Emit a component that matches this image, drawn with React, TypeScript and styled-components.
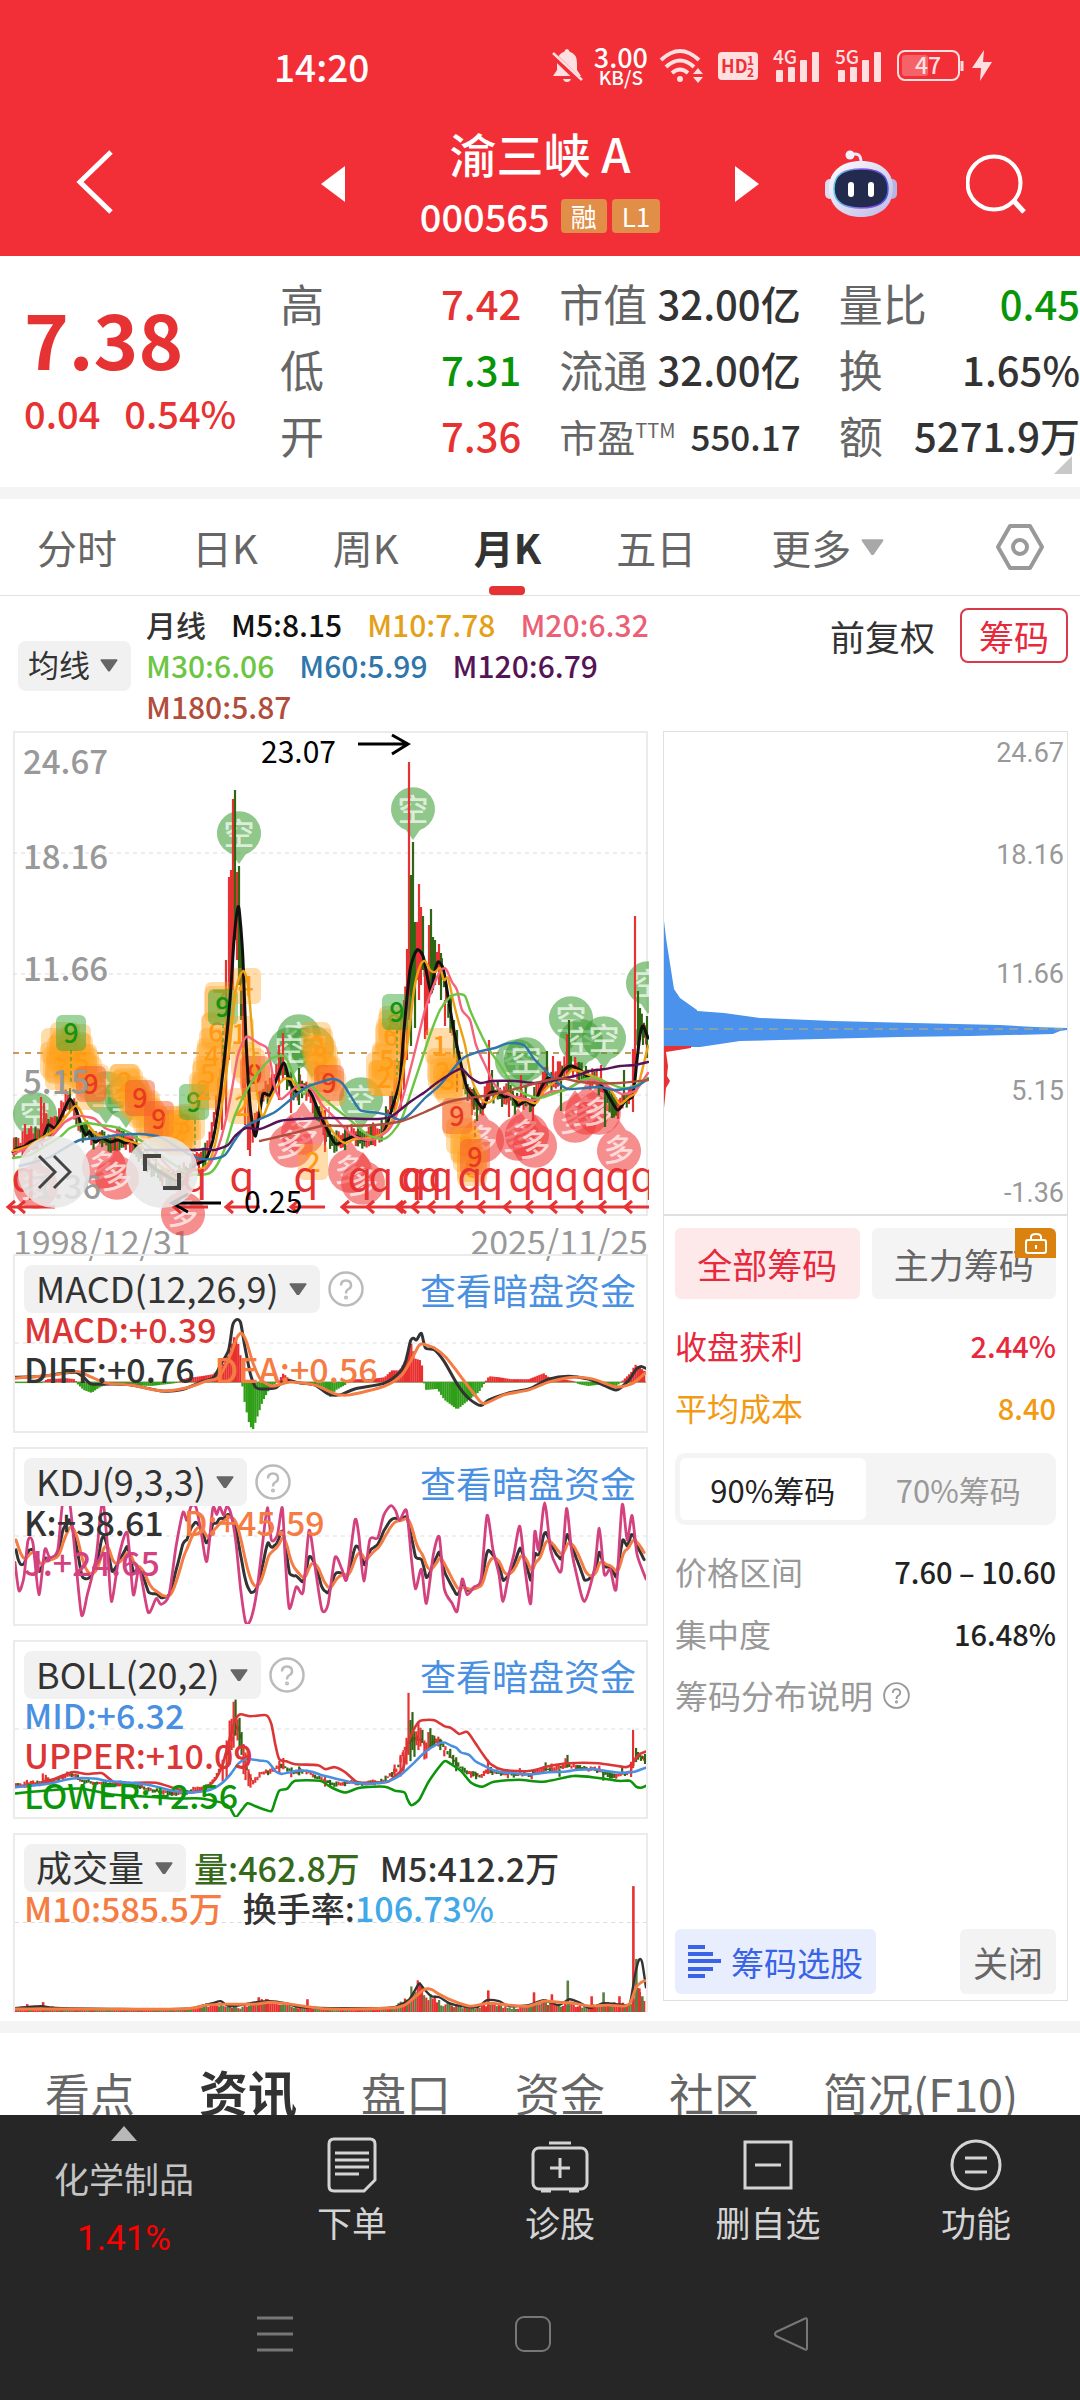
import React from "react";
import styled, { createGlobalStyle } from "styled-components";

/* ---------- theme ---------- */

const FONT = '"Noto Sans CJK SC", "Noto Sans", sans-serif';
const RED = "#e63232";
const GREEN = "#089508";
const INK = "#333333";
const GREY = "#666666";
const PALE = "#999999";
const BLUE = "#4a90e2";
const ORANGE = "#f57c42";

const GlobalStyle = createGlobalStyle`
  *, *::before, *::after { box-sizing: border-box; }
  body { margin: 0; background: #fff; font-family: ${FONT}; color: ${INK}; }
  button, select { font: inherit; color: inherit; border: 0; background: none; padding: 0; margin: 0; cursor: pointer; }
  a { text-decoration: none; color: inherit; }
  svg { display: block; flex: none; }
`;

/* ---------- series helpers ---------- */

type Point = [number, number];

const STEP = 2.15;
const X0 = 14;
const X1 = 648;

const at = (points: Point[], x: number): number => {
  if (x <= points[0][0]) return points[0][1];
  for (let i = 1; i < points.length; i++) {
    const [bx, by] = points[i];
    if (x <= bx) {
      const [ax, ay] = points[i - 1];
      return ay + ((by - ay) * (x - ax)) / (bx - ax || 1);
    }
  }
  return points[points.length - 1][1];
};

const noise = (n: number): number => {
  const v = Math.sin(n * 127.1 + 11.7) * 43758.5453;
  return v - Math.floor(v);
};

const smooth = (points: Point[]): string => {
  let d = `M${points[0][0]} ${points[0][1]}`;
  for (let i = 0; i < points.length - 1; i++) {
    const p0 = points[Math.max(0, i - 1)];
    const p1 = points[i];
    const p2 = points[i + 1];
    const p3 = points[Math.min(points.length - 1, i + 2)];
    const c = (a: number, b: number, k: number) => (a + (k * b) / 8).toFixed(1);
    d += `C${c(p1[0], p2[0] - p0[0], 1)} ${c(p1[1], p2[1] - p0[1], 1)} ${c(p2[0], p3[0] - p1[0], -1)} ${c(p2[1], p3[1] - p1[1], -1)} ${p2[0]} ${p2[1]}`;
  }
  return d;
};

const parse = (text: string): Point[] =>
  text.trim().split(/\s+/).map((pair) => pair.split(",").map(Number) as Point);

const xs: number[] = [];
for (let x = X0; x < X1; x += STEP) xs.push(x);

/* ---------- data ---------- */

const M5 = parse(`13,1152 16,1149 25,1146 30,1142 36,1140 42,1141 48,1125 55,1128 62,1115 70,1099 77,1112 82,1128 86,1135 90,1132 95,1142 102,1138 110,1142 118,1140 125,1143
  132,1141 140,1152 150,1165 160,1172 170,1178 178,1180 188,1175 195,1165 205,1160 210,1150 215,1130 222,1080 230,1000 234,940 238,907 240,918 243,960 246,1040 250,1105
  255,1136 259,1118 263,1094 270,1095 277,1078 284,1063 290,1082 297,1092 305,1086 312,1095 320,1115 330,1135 336,1144 345,1140 355,1136 364,1140 372,1138 384,1132
  393,1105 400,1080 404,1030 410,970 417,950 423,956 427,975 431,993 434,975 438,962 443,968 447,990 452,1020 460,1060 467,1088 475,1098 483,1108 489,1094 495,1092
  505,1097 512,1095 518,1105 526,1101 534,1105 540,1090 548,1078 556,1082 564,1070 571,1066 580,1070 590,1078 597,1080 605,1090 612,1102 618,1110 626,1100 633,1095
  637,1060 640,1035 643,1026 648,1038`);
const M10 = parse(`13,1151 30,1145 45,1136 55,1130 67,1115 75,1106 80,1110 85,1120 95,1133 105,1137 115,1136 125,1140 140,1145 152,1158 165,1170 180,1180 190,1172 205,1167
  212,1155 218,1130 228,1060 236,990 243,971 248,985 252,1030 256,1085 262,1116 268,1105 275,1090 284,1079 292,1080 298,1090 308,1088 316,1090 325,1118 335,1135
  345,1143 355,1139 370,1138 385,1132 392,1120 398,1100 408,1040 414,990 420,966 425,961 430,970 435,972 440,968 444,980 448,978 453,1000 458,1020 465,1045 472,1080
  482,1100 490,1102 500,1092 510,1094 518,1100 526,1100 536,1103 545,1090 555,1082 565,1078 572,1070 582,1072 592,1076 602,1080 612,1092 620,1104 628,1098 636,1092
  641,1075 648,1046`);
const M20 = parse(`13,1154 30,1147 50,1138 65,1122 78,1116 88,1117 95,1119 105,1128 115,1132 140,1140 155,1152 172,1170 188,1176 205,1170 215,1155 222,1135 230,1100 238,1055
  246,1037 252,1039 260,1044 267,1048 271,1065 275,1088 281,1099 290,1092 300,1085 312,1090 322,1105 335,1118 350,1133 362,1139 375,1139 390,1128 402,1100 414,1055
  425,1010 435,982 441,970 446,969 452,982 457,990 462,1010 470,1020 476,1045 485,1065 495,1085 505,1093 520,1098 535,1100 550,1092 565,1090 580,1082 595,1080
  610,1088 622,1094 635,1091 642,1082 648,1073`);
const M30 = parse(`13,1158 30,1155 45,1146 60,1137 70,1128 85,1123 100,1125 115,1127 130,1133 150,1148 170,1162 190,1174 207,1174 215,1168 225,1148 235,1115 248,1088 262,1068
  272,1058 284,1056 290,1066 296,1082 304,1094 310,1084 320,1095 335,1108 350,1120 368,1135 383,1139 392,1133 402,1118 415,1080 430,1035 440,1010 450,997 458,994
  465,996 470,1010 478,1028 488,1048 500,1065 512,1084 525,1094 540,1098 555,1093 570,1088 582,1080 595,1078 608,1083 622,1088 635,1086 648,1078`);
const M60 = parse(`20,1166 35,1162 50,1157 65,1148 80,1140 100,1138 118,1135 140,1134 160,1137 180,1149 197,1158 212,1159 225,1155 235,1140 245,1127 258,1120 275,1112 290,1100
  305,1088 318,1083 332,1079 342,1083 350,1095 360,1110 372,1112 388,1115 400,1120 410,1114 425,1098 440,1085 462,1059 478,1052 495,1048 505,1044 515,1043 525,1046
  535,1060 548,1073 558,1083 568,1089 585,1088 600,1087 615,1090 635,1087 648,1079`);
const M120 = parse(`145,1150 195,1150 205,1149 215,1150 228,1145 235,1136 246,1128 260,1129 280,1121 300,1119 330,1118 378,1119 392,1116 410,1102 425,1092 438,1082 460,1069
  470,1077 480,1083 492,1081 515,1081 535,1083 555,1080 575,1076 590,1071 605,1069 620,1066 635,1065 648,1062`);
const M180 = parse(`260,1141 290,1134 322,1126 345,1126 375,1125 402,1121 425,1112 445,1103 462,1099 490,1095 515,1089 540,1082 560,1078 575,1081 590,1083 620,1083 648,1080`);

/* x, high, low for the outliers of the candle series */
const SPIKES: [number, number, number, boolean][] = [
  [25, 1124, 1150, true], [41, 1097, 1135, true], [44, 1103, 1140, true], [51, 1117, 1135, true], [70, 1088, 1112, false],
  [222, 1040, 1130, true], [226, 960, 1120, true], [229, 877, 1060, true], [231, 870, 1000, true], [233, 799, 990, true], [235, 790, 940, false],
  [237, 872, 960, true], [239, 866, 985, false], [241, 925, 1020, false], [243, 975, 1100, true], [245, 1010, 1125, true], [248, 1080, 1150, true], [250, 1100, 1156, true],
  [279, 1045, 1100, true], [283, 1033, 1080, true], [299, 1068, 1105, false], [291, 1090, 1113, true], [325, 1110, 1152, true],
  [395, 1060, 1120, true], [401, 1020, 1110, true], [404, 1000, 1090, true], [407, 949, 1060, true], [409, 762, 1020, true], [411, 875, 1046, false], [413, 842, 1000, false],
  [415, 922, 1028, false], [417, 922, 980, true], [419, 884, 1000, true], [421, 907, 985, true], [423, 916, 970, false], [425, 960, 1039, true], [427, 985, 1035, true],
  [429, 925, 980, true], [431, 909, 990, false], [433, 937, 990, false], [435, 940, 985, false], [437, 952, 970, true], [439, 944, 985, true], [441, 953, 1000, false],
  [445, 1000, 1026, true], [451, 995, 1030, false], [454, 1020, 1058, false], [457, 1030, 1088, false], [472, 1090, 1115, true], [477, 1095, 1121, false],
  [489, 1040, 1100, true], [492, 1070, 1095, false], [509, 1098, 1117, true], [521, 1075, 1100, true], [533, 1100, 1121, true], [547, 1051, 1085, false],
  [553, 1056, 1080, true], [561, 1080, 1111, false], [567, 1034, 1075, true], [569, 1020, 1070, false], [579, 1062, 1080, false], [601, 1065, 1092, true],
  [605, 1090, 1127, false], [612, 1095, 1118, false], [618, 1100, 1119, true], [624, 1070, 1100, false], [633, 1049, 1112, true], [635, 916, 1075, true],
  [638, 991, 1050, false], [640, 1008, 1040, false], [643, 1030, 1045, false], [647, 1016, 1058, false],
];

interface Candle { x: number; high: number; low: number; up: boolean }

const candles: Candle[] = [
  ...xs.map((x, i) => {
    const mid = at(M5, x + 2);
    const slope = at(M5, x + 4) - at(M5, x - 1);
    return {
      x,
      high: mid - 3 - noise(i) * 12,
      low: mid + 2 + noise(i + 500) * 10,
      up: noise(i + 900) < (slope < 0 ? 0.8 : 0.35),
    };
  }),
  ...SPIKES.map(([x, high, low, up]) => ({ x, high, low, up })),
];

const MACD_BARS = parse(`13,-1 40,-1 45,3 65,4 73,3 76,-2 82,-8 90,-11 97,-6 105,-2 130,-3 150,-4 175,-1 185,4 200,6 212,8 220,15 226,24 230,36 234,48 238,38 240,26 242,-6 244,-20
  248,-40 252,-50 256,-38 262,-20 270,-5 278,1 283,9 288,4 295,1 310,-1 322,-5 330,-15 336,-8 345,-3 352,3 370,3 385,5 392,12 400,12 406,22 411,42 416,24 422,22 424,2 426,-8
  438,-7 445,-18 458,-28 470,-18 480,-10 486,0 490,6 500,5 512,3 530,3 545,9 550,5 565,3 575,1 580,-2 590,-4 605,-2 615,-6 622,-1 627,4 633,10 637,18 643,14 648,10`);
const DIFF = parse(`13,1378 40,1377 60,1374 74,1373 82,1378 90,1385 110,1385 130,1386 160,1392 180,1391 200,1383 213,1378 220,1365 228,1350 232,1325 236,1319 240,1322 244,1345
  250,1375 255,1388 260,1390 275,1389 285,1381 300,1384 315,1386 328,1395 340,1396 355,1390 385,1384 400,1373 406,1362 411,1341 414,1338 417,1340 422,1333 426,1348
  435,1350 445,1362 458,1385 470,1400 482,1407 490,1401 510,1394 530,1390 550,1380 570,1377 590,1380 605,1386 618,1391 630,1382 638,1370 643,1367 648,1369`);
const DEA = parse(`13,1379 50,1376 75,1372 90,1378 105,1384 130,1386 160,1392 185,1389 205,1382 218,1378 230,1355 236,1338 241,1333 246,1342 252,1362 260,1380 272,1387 290,1383
  315,1386 335,1395 350,1396 385,1387 402,1376 413,1358 418,1348 422,1344 435,1348 447,1358 460,1375 475,1395 485,1405 505,1396 530,1391 550,1383 575,1378 595,1380
  618,1388 635,1384 648,1373`);

const J_LINE = parse(`13,1563 17,1592 22,1578 26,1541 31,1543 37,1596 43,1550 48,1558 56,1550 61,1502 68,1502 74,1560 80,1617 86,1595 91,1575 95,1555 101,1500 106,1545 110,1603
  118,1555 126,1533 132,1596 138,1570 147,1614 155,1600 160,1606 168,1596 175,1547 182,1512 186,1520 190,1506 195,1506 200,1530 206,1562 212,1508 216,1514 219,1506 223,1515
  226,1506 230,1512 235,1540 240,1590 245,1624 250,1622 256,1595 262,1545 267,1507 271,1540 277,1535 282,1507 285,1560 289,1610 296,1588 303,1593 309,1530 316,1575
  322,1612 328,1606 335,1558 342,1570 347,1580 355,1520 359,1535 364,1582 370,1540 378,1538 384,1515 391,1505 396,1510 400,1520 407,1510 412,1560 416,1590 422,1570
  427,1605 434,1555 440,1537 445,1590 453,1605 458,1613 463,1580 468,1596 475,1588 482,1580 488,1515 494,1550 500,1575 504,1603 510,1575 515,1555 521,1526 526,1568
  532,1605 536,1532 540,1550 546,1502 552,1550 558,1567 563,1570 568,1508 573,1550 578,1575 586,1603 596,1570 601,1528 606,1575 612,1570 618,1590 624,1504 629,1540
  634,1515 639,1555 648,1580`);

const kLine: Point[] = [];
const dLine: Point[] = [];
let prevD = 1535;
xs.forEach((x) => {
  const j = at(J_LINE, x);
  const k = (3 * j + 4 * prevD) / 7;
  prevD = (2 * prevD) / 3 + k / 3;
  kLine.push([x, k]);
  dLine.push([x, prevD]);
});

const UPPER = parse(`13,1788 40,1785 60,1777 72,1773 85,1775 100,1774 108,1780 118,1786 135,1784 155,1784 175,1790 190,1794 205,1789 215,1780 222,1765 230,1735 235,1719 240,1714
  250,1716 266,1715 271,1724 275,1745 279,1760 286,1762 295,1765 318,1766 325,1770 335,1768 345,1773 357,1783 372,1784 388,1783 398,1775 404,1768 408,1745 413,1732 419,1722
  423,1720 435,1720 445,1726 452,1728 460,1734 468,1732 476,1743 484,1755 492,1765 505,1771 530,1772 550,1767 570,1764 600,1764 628,1768 635,1763 641,1755 648,1752`);
const LOWER = parse(`13,1795 45,1792 80,1790 110,1796 145,1798 170,1800 200,1800 215,1803 223,1805 229,1809 235,1819 241,1812 247,1805 255,1808 263,1811 271,1813 275,1802 279,1792
  287,1790 295,1782 320,1782 330,1788 345,1794 360,1789 385,1788 395,1792 405,1794 408,1801 412,1807 420,1801 428,1785 436,1773 445,1762 452,1765 462,1772 472,1784
  483,1788 495,1783 520,1781 545,1783 575,1777 600,1779 620,1782 632,1782 638,1788 643,1789 648,1787`);

const VOLUME = parse(`13,4 40,6 60,4 100,3 180,3 200,6 212,9 225,8 240,5 256,10 262,13 275,10 290,7 310,5 330,3 380,3 395,6 405,12 410,22 414,24 418,34 421,26 425,16 432,18 440,10 455,8
  475,4 488,10 500,9 510,4 530,7 545,13 560,7 570,10 590,6 605,8 620,10 632,6 640,22 648,12`);
const V_SPIKES: [number, number, boolean][] = [
  [25, 8, true], [41, 10, true], [258, 15, true], [267, 13, true], [307, 13, true], [489, 22, true], [535, 20, true], [553, 18, true], [569, 32, false], [593, 16, true],
  [605, 20, false], [621, 16, true], [635, 128, true], [638, 54, false], [641, 24, true], [644, 16, false],
];
const V5 = parse(`13,2009 25,2008 40,2007 60,2009 180,2010 200,2007 212,2004 220,2002 228,2007 240,2006 256,2003 270,2002 285,2004 300,2008 330,2009 380,2009 395,2008 404,2004 410,2000 416,1990
  420,1984 425,1990 432,1997 440,1998 450,2004 462,2007 478,2008 488,2001 500,2002 510,2007 530,2006 545,2001 560,2006 571,2000 582,2004 592,2009 605,2004 618,2005 628,2006
  632,2004 637,1975 641,1960 644,1962 648,1988`);
const V10 = parse(`13,2010 60,2010 180,2010 205,2006 225,2005 255,2005 270,2003 290,2005 310,2008 330,2010 390,2009 405,2006 415,1998 425,1990 432,1990 440,1995 452,2001 470,2007 490,2004
  510,2006 530,2007 545,2002 560,2003 575,2004 592,2007 610,2006 625,2007 632,2004 638,1988 643,1983 648,1981`);

type Mark = [number, number];
const SHORTS: Mark[] = [[239, 834], [413, 810], [35, 1115], [106, 1094], [126, 1098], [299, 1037], [312, 1048], [290, 1050], [361, 1100], [517, 1062], [526, 1060], [571, 1019], [581, 1042], [604, 1039], [648, 984]];
const LONGS: Mark[] = [[36, 1186], [104, 1166], [117, 1177], [183, 1213], [303, 1132], [291, 1145], [350, 1170], [363, 1182], [482, 1140], [518, 1138], [527, 1134], [535, 1145], [575, 1120], [587, 1112], [599, 1112], [619, 1150]];

/* unlabelled tiles of the nine-turn runs, drawn under the numbered ones */
const RUNS: Mark[] = [
  [55, 1060], [56, 1046], [60, 1072], [62, 1054], [65, 1040], [68, 1062], [70, 1076], [76, 1042], [78, 1052], [80, 1062], [84, 1066], [87, 1074], [90, 1092], [94, 1082],
  [58, 1064], [66, 1048], [72, 1056], [82, 1070], [126, 1088], [135, 1098], [145, 1108], [151, 1120], [164, 1134], [170, 1128], [180, 1138],
  [124, 1082], [128, 1086], [133, 1094], [137, 1102], [143, 1110], [148, 1116], [154, 1124], [162, 1128], [167, 1124], [172, 1132], [177, 1136], [181, 1128], [186, 1134], [190, 1122],
  [207, 1078], [211, 1060], [214, 1046], [217, 1030], [219, 1004], [206, 1092], [213, 1082],
  [246, 1060], [250, 1066], [256, 1082], [316, 1040], [319, 1052], [323, 1062], [326, 1074], [331, 1088],
  [381, 1070], [383, 1078], [387, 1062], [390, 1040], [393, 1028], [386, 1078],
  [442, 1066], [445, 1076], [448, 1082], [452, 1072], [451, 1086], [458, 1120], [461, 1136], [465, 1144], [468, 1154], [472, 1164],
];

type Tile = [number, number, string, "o" | "g" | "r"];
const TILES: Tile[] = [
  [61, 1066, "2", "o"], [64, 1052, "3", "o"], [75, 1050, "1", "o"], [82, 1062, "5", "o"], [71, 1033, "9", "g"], [91, 1084, "9", "r"],
  [125, 1082, "2", "o"], [140, 1098, "9", "r"], [159, 1119, "9", "r"], [178, 1132, "2", "o"], [184, 1124, "3", "o"], [194, 1102, "9", "g"],
  [204, 1090, "2", "o"], [208, 1074, "5", "o"], [212, 1056, "4", "o"], [216, 1032, "6", "o"], [220, 1000, "7", "o"], [223, 1007, "9", "g"],
  [246, 986, "4", "o"], [239, 1034, "1", "o"], [255, 1074, "9", "r"], [242, 1106, "2", "o"],
  [318, 1046, "2", "o"], [321, 1056, "3", "o"], [322, 1074, "6", "o"], [329, 1083, "9", "r"], [313, 1162, "2", "o"],
  [384, 1078, "2", "o"], [387, 1060, "5", "o"], [391, 1036, "6", "o"], [394, 1024, "8", "o"], [397, 1012, "9", "g"],
  [440, 1046, "1", "o"], [443, 1072, "2", "o"], [448, 1080, "3", "o"], [457, 1116, "9", "r"], [466, 1146, "3", "o"], [472, 1168, "6", "o"], [475, 1157, "9", "r"],
];
const TILE_FILL = { o: "#ffa21f", g: "#3aa93a", r: "#f55a2a" };
const TILE_INK = { o: "#ff9a14", g: "#129412", r: "#e93a20" };

const Q_MARKS = [24, 195, 242, 306, 360, 381, 410, 414, 430, 441, 470, 491, 521, 543, 567, 594, 618, 643];
const Q_HEADS = [8, 18, 174, 226, 291, 342, 367, 396, 399, 412, 428, 456, 478, 504, 526, 550, 576, 599, 625];
const Q_RAILS: Point[] = [[8, 55], [174, 208], [226, 260], [291, 325], [342, 649]];

/* ---------- chart parts ---------- */

const Plot = styled.svg`
  width: 100%;
  height: auto;
  overflow: visible;
  font-family: ${FONT};
`;

const BackPlot = styled.svg`
  position: absolute;
  inset: 0;
  width: 100%;
  height: 100%;
`;

const Line = ({ points, color, width = 2.4 }: { points: Point[]; color: string; width?: number }) => (
  <path d={smooth(points)} fill="none" stroke={color} strokeWidth={width} strokeLinejoin="round" strokeLinecap="round" />
);

const Grid = ({ y }: { y: number }) => <path d={`M13 ${y}H648`} stroke="#dcdcdc" strokeWidth="1" strokeDasharray="4 4" />;

const Pin = ({ x, y, short }: { x: number; y: number; short?: boolean }) => (
  <g>
    <path
      d={short ? `M${x - 7} ${y + 20}L${x} ${y + 30}L${x + 7} ${y + 20}A22 22 0 1 0 ${x - 7} ${y + 20}Z` : `M${x - 7} ${y - 20}L${x} ${y - 30}L${x + 7} ${y - 20}A22 22 0 1 1 ${x - 7} ${y - 20}Z`}
      fill={short ? "#3f9f35" : "#f03c3c"}
      fillOpacity="0.58"
    />
    <text x={x} y={y + 11} fontSize="31" fontWeight="500" textAnchor="middle" fill="#fff" fillOpacity="0.7">
      {short ? "空" : "多"}
    </text>
  </g>
);

const CandleBars = ({ map = (y: number) => y }: { map?: (y: number) => number }) => (
  <g>
    {candles.map((c, i) => (
      <path key={i} d={`M${c.x} ${map(c.high)}V${map(c.low)}`} stroke={c.up ? RED : "#2f6613"} strokeWidth="2.2" />
    ))}
  </g>
);

const AXIS: [string, number, number][] = [["24.67", 762, 752], ["18.16", 857, 854], ["11.66", 969, 973], ["5.15", 1082, 1090], ["-1.36", 1187, 1192]];

const PriceChart = () => (
  <Plot viewBox="13 731 635 485">
    <clipPath id="price-clip">
      <rect x="0" y="731" width="649" height="520" />
    </clipPath>
    <rect x="14" y="732" width="633" height="483" fill="none" stroke="#ebebeb" strokeWidth="2" />
    <Grid y={853} />
    <Grid y={974} />
    <Grid y={1095} />
    <path d="M13 1053H648" stroke="#c89a5a" strokeWidth="2" strokeDasharray="6 6" />
    <g clipPath="url(#price-clip)">
      {SHORTS.map(([x, y]) => <Pin key={`${x}-${y}`} x={x} y={y} short />)}
      {LONGS.map(([x, y]) => <Pin key={`${x}-${y}`} x={x} y={y} />)}
      <CandleBars />
      {RUNS.map(([x, y], i) => <rect key={i} x={x - 15} y={y - 18} width="30" height="36" rx="7" fill="#ffa21f" fillOpacity="0.38" />)}
      {TILES.map(([x, y, label, tone], i) => (
        <g key={i}>
          <rect x={x - 15} y={y - 18} width="30" height="36" rx="6" fill={TILE_FILL[tone]} fillOpacity={tone === "o" ? 0.38 : 0.5} />
          <text x={x} y={y + 10} fontSize="27" fontWeight="500" textAnchor="middle" fill={TILE_INK[tone]}>{label}</text>
        </g>
      ))}
      <path d="M71 1050V1085M223 1024V1070M397 1030V1075M195 1120V1158" stroke="#2b9a2b" strokeWidth="1" strokeDasharray="4 3" />
      <path d="M250 1080V1130M329 1100V1120M457 1060V1095M475 1105V1140" stroke="#d64a1a" strokeWidth="1" strokeDasharray="4 3" />
      <Line points={M5} color="#111" width={3} />
      <Line points={M10} color="#eda012" />
      <Line points={M20} color="#f5637c" />
      <Line points={M30} color="#6cc644" />
      <Line points={M60} color="#2f76ab" />
      <Line points={M120} color="#551455" />
      <Line points={M180} color="#b14d3c" />
      <g fontSize="40" fill={RED} textAnchor="middle">
        {Q_MARKS.map((x) => <text key={x} x={x} y="1191">q</text>)}
      </g>
      <g stroke={RED} strokeWidth="3" fill="none">
        {Q_RAILS.map(([a, b]) => <path key={a} d={`M${a} 1207H${b}`} />)}
        {Q_HEADS.map((x) => <path key={x} d={`M${x + 7} 1201L${x} 1207L${x + 7} 1213`} />)}
      </g>
    </g>
    <g fontSize="33" fontWeight="500" fill={PALE}>
      {AXIS.map(([label, y]) => <text key={label} x="23" y={y + 12}>{label}</text>)}
    </g>
    <g fontSize="30" fill="#000">
      <text x="261" y="763">23.07</text>
      <text x="244" y="1213">0.25</text>
    </g>
    <path d="M358 744H408M392 735L408 744L392 754M221 1203H174M188 1194L172 1203L188 1212" stroke="#000" strokeWidth="3" fill="none" />
  </Plot>
);

const CostChart = () => (
  <Plot viewBox="664 732 403 484">
    <path d="M664 921L666 938L674 989L680 998L697 1010V1011L724 1013L760 1018L833 1021L913 1023L1000 1025L1035 1027L1067 1028V1030L1060 1031L1053 1034L970 1036L900 1037L780 1040L740 1041L700 1047H664Z" fill="#4a92ec" />
    <path d="M664 1046H691V1048L666 1052L668 1066L667 1076L670 1081L666 1088L664 1108Z" fill={RED} />
    <path d="M664 1029H1067" stroke="#c8b070" strokeDasharray="9 6" />
    <path d="M664 1215H1067" stroke="#e0e0e0" strokeWidth="2" />
    <g fontSize="27" fill={PALE} textAnchor="end" fontFamily="Roboto, sans-serif">
      {AXIS.map(([label, , y]) => <text key={label} x="1064" y={y + 10}>{label}</text>)}
    </g>
  </Plot>
);

const MacdPlot = () => (
  <BackPlot viewBox="13 1254 635 179" preserveAspectRatio="none" aria-hidden>
    <Grid y={1343} />
    <path d="M13 1383H648" stroke="#5a7a2a" />
    {xs.map((x) => {
      const v = at(MACD_BARS, x);
      return <rect key={x} x={x - 1.1} y={v > 0 ? 1383 - v : 1383} width="2.3" height={Math.abs(v)} fill={v > 0 ? "#e93030" : "#2f9e18"} />;
    })}
    <Line points={DIFF} color={INK} width={3} />
    <Line points={DEA} color={ORANGE} width={3} />
  </BackPlot>
);

const KdjPlot = () => (
  <BackPlot viewBox="13 1447 635 179" preserveAspectRatio="none" aria-hidden>
    <Grid y={1536} />
    <Line points={kLine} color={INK} width={3} />
    <Line points={dLine} color={ORANGE} width={3} />
    <Line points={J_LINE} color="#d3417f" width={2.8} />
  </BackPlot>
);

const bollY = (y: number) => 1692 + (y - 762) * 0.246;

const BollPlot = () => (
  <BackPlot viewBox="13 1640 635 179" preserveAspectRatio="none" aria-hidden>
    <Grid y={1729} />
    <CandleBars map={bollY} />
    <Line points={UPPER} color="#dc3535" width={2.6} />
    <Line points={M20.map(([x, y]): Point => [x, bollY(y)])} color={BLUE} width={2.6} />
    <Line points={LOWER} color="#0a950a" width={2.6} />
  </BackPlot>
);

const VolumePlot = () => (
  <BackPlot viewBox="13 1833 635 180" preserveAspectRatio="none" aria-hidden>
    <Grid y={1922} />
    {xs.map((x, i) => {
      const h = at(VOLUME, x) * (0.6 + noise(i + 40) * 0.6);
      return <rect key={x} x={x - 1} y={2013 - h} width="2.2" height={h} fill={noise(i + 900) < 0.58 ? "#e93030" : "#5a7f40"} />;
    })}
    {V_SPIKES.map(([x, h, up]) => <rect key={x} x={x - 1} y={2013 - h} width="2.6" height={h} fill={up ? "#e93030" : "#5a7f40"} />)}
    <Line points={V5} color={INK} />
    <Line points={V10} color={ORANGE} width={3} />
  </BackPlot>
);

/* ---------- layout ---------- */

const Screen = styled.div`
  display: flex;
  flex-direction: column;
  height: 100vh;
`;

const Header = styled.header`
  background: #f22f37;
  color: #fff;
`;

const StatusBar = styled.div`
  display: flex;
  align-items: center;
  padding: 28px 88px 0 274px;
  height: 104px;
  font-size: 37px;
  font-weight: 500;

  svg { overflow: visible; }
`;

const StatusIcons = styled.div`
  display: flex;
  align-items: center;
  gap: 15px;
  margin-left: auto;
  color: #ffdfe0;
`;

const Speed = styled.div`
  display: flex;
  flex-direction: column;
  align-items: center;
  margin: 0 -4px;
  color: #fff;
  font-size: 19px;
  line-height: 20px;

  b { font-size: 27px; font-weight: 500; line-height: 21px; }
`;

const TitleBar = styled.div`
  display: grid;
  grid-template-columns: 1fr auto 1fr;
  align-items: center;
  padding: 8px 54px 0;
  height: 152px;
`;

const BackButton = styled.button`
  padding: 0 22px;
`;

const TitleMiddle = styled.div`
  display: flex;
  align-items: center;
  justify-content: space-between;
  width: 438px;
`;

const TitleText = styled.div`
  display: flex;
  flex-direction: column;
  align-items: center;

  h1 { margin: 0; font-size: 47px; font-weight: 500; line-height: 64px; }
`;

const CodeRow = styled.div`
  display: flex;
  align-items: center;
  gap: 5px;
  font-size: 38px;
  font-weight: 500;
  line-height: 62px;
`;

const Badge = styled.span`
  padding: 0 10px;
  border-radius: 4px;
  background: #e08e48;
  font-size: 26px;
  font-weight: 400;
  line-height: 34px;

  &:first-of-type { margin-left: 6px; }
`;

const TitleActions = styled.div`
  display: flex;
  align-items: center;
  justify-content: flex-end;
  gap: 68px;
`;

const Body = styled.main`
  flex: 1;
  min-height: 0;
  overflow: hidden;
`;

const Quote = styled.section`
  position: relative;
  display: grid;
  grid-template-columns: 218px 1fr 1fr 1fr;
  column-gap: 38px;
  padding: 14px 0 19px 24px;
`;

const LastPrice = styled.div`
  display: flex;
  flex-direction: column;
  justify-content: center;
  padding-bottom: 4px;
  color: ${RED};
  white-space: nowrap;

  strong { font-size: 76px; font-weight: 700; line-height: 88px; }
`;

const Change = styled.div`
  display: flex;
  gap: 24px;
  margin-top: 4px;
  font-size: 38px;
  font-weight: 500;
  line-height: 56px;
`;

const Facts = styled.dl`
  margin: 0;
`;

const Fact = styled.div`
  display: flex;
  align-items: center;
  justify-content: space-between;
  height: 66px;
  white-space: nowrap;
`;

const FactName = styled.dt<{ $small?: boolean }>`
  font-size: ${(p) => (p.$small ? 38 : 44)}px;
  color: ${GREY};

  sup { font-size: 20px; line-height: 20px; vertical-align: 14px; }
`;

const FactValue = styled.dd<{ $color?: string; $small?: boolean }>`
  margin: 0;
  font-size: ${(p) => (p.$small ? 35 : 40)}px;
  font-weight: 500;
  color: ${(p) => p.$color || INK};
`;

const Corner = styled.i`
  position: absolute;
  right: 8px;
  bottom: 13px;
  border: solid transparent;
  border-width: 0 0 0 18px;
  border-bottom: 18px solid #c8c8c8;
`;

const Divider = styled.div`
  height: 12px;
  background: #f4f4f4;
`;

const PeriodTabs = styled.nav`
  display: flex;
  align-items: center;
  gap: 75px;
  height: 97px;
  padding: 0 36px 0 37px;
  border-bottom: 1px solid #e2e2e2;
`;

const PeriodTab = styled.button<{ $on?: boolean }>`
  position: relative;
  display: flex;
  align-items: center;
  gap: 10px;
  height: 100%;
  font-size: 40px;
  font-weight: ${(p) => (p.$on ? 700 : 400)};
  color: ${(p) => (p.$on ? INK : GREY)};
  white-space: nowrap;

  &::after {
    content: "";
    display: ${(p) => (p.$on ? "block" : "none")};
    position: absolute;
    left: calc(50% - 18px);
    bottom: 0;
    width: 36px;
    height: 9px;
    border-radius: 4px;
    background: ${RED};
  }
`;

const IconButton = styled.button<{ $end?: boolean }>`
  margin-left: ${(p) => (p.$end ? "auto" : 0)};
`;

const Legend = styled.section`
  display: flex;
  align-items: center;
  gap: 15px;
  padding: 8px 12px 4px 18px;
`;

const Averages = styled.div`
  display: flex;
  flex-wrap: wrap;
  column-gap: 25px;
  width: 530px;
  font-size: 30px;
  line-height: 41px;
`;

const Tint = styled.span<{ $color?: string }>`
  color: ${(p) => p.$color || INK};
  font-weight: 500;
  white-space: nowrap;
`;

const LegendActions = styled.div`
  display: flex;
  align-items: center;
  align-self: flex-start;
  gap: 25px;
  margin-left: auto;
  padding-top: 4px;
  font-size: 35px;
`;

const OutlineButton = styled.button`
  width: 108px;
  height: 55px;
  border: 2px solid #d93a4a;
  border-radius: 8px;
  color: #e8283c;
`;

const Picker = styled.label<{ $large?: boolean }>`
  display: inline-flex;
  align-items: center;
  height: ${(p) => (p.$large ? 48 : 50)}px;
  border-radius: 8px;
  background: #f1f1f1;
  font-size: ${(p) => (p.$large ? 36 : 31)}px;

  select {
    appearance: none;
    height: 60px;
    margin-top: -4px;
    padding: 0 41px 0 ${(p) => (p.$large ? 12 : 10)}px;
    outline: none;
  }
  svg { margin-left: -31px; margin-right: 13px; pointer-events: none; }
`;

const Charts = styled.section`
  display: grid;
  grid-template-columns: 635fr 405fr;
  column-gap: 15px;
  padding: 0 12px 9px 13px;
`;

const PriceBox = styled.div`
  position: relative;
`;

const RoundButton = styled.button<{ $left: number }>`
  position: absolute;
  left: ${(p) => p.$left}px;
  bottom: 8px;
  display: grid;
  place-items: center;
  width: 72px;
  height: 72px;
  border-radius: 50%;
  background: rgba(232, 232, 232, 0.85);
`;

const Dates = styled.div`
  display: flex;
  justify-content: space-between;
  height: 38px;
  color: ${PALE};
  font-size: 34px;
  line-height: 50px;
`;

const Panels = styled.div`
  display: grid;
  gap: 14px;
`;

const Panel = styled.section<{ $open?: boolean }>`
  position: relative;
  min-height: 179px;
  padding: 9px 10px 0 9px;
  border: 2px solid #ebebeb;
  border-bottom-width: ${(p) => (p.$open ? 0 : 2)}px;
`;

const PanelHead = styled.div`
  position: relative;
  display: flex;
  align-items: center;
  gap: 8px;
  height: 48px;
  margin-bottom: -4px;
  font-size: 34px;
`;

const Readings = styled.div`
  position: relative;
  display: flex;
  flex-wrap: wrap;
  column-gap: 20px;
  font-size: 34px;
  line-height: 40px;
`;

const Break = styled.i`
  width: 100%;
`;

const PanelLink = styled.a`
  margin-left: auto;
  color: ${BLUE};
  font-size: 36px;
`;

const Chips = styled.aside`
  display: flex;
  flex-direction: column;
  margin-bottom: 11px;
  border: 1px solid #e0e0e0;
`;

const ChipsBody = styled.div`
  display: flex;
  flex: 1;
  flex-direction: column;
  padding: 12px 11px 6px;
`;

const ChipTabs = styled.div`
  display: grid;
  grid-template-columns: 1fr 1fr;
  gap: 12px;
  margin-bottom: 15px;
`;

const ChipTab = styled.button<{ $on?: boolean }>`
  position: relative;
  height: 71px;
  border-radius: 6px;
  background: ${(p) => (p.$on ? "#fde8ea" : "#f4f4f4")};
  color: ${(p) => (p.$on ? "#e8283c" : GREY)};
  font-size: 35px;
`;

const LockBadge = styled.span`
  position: absolute;
  top: 0;
  right: 0;
  display: grid;
  place-items: center;
  width: 41px;
  height: 30px;
  border-radius: 0 6px 0 0;
  background: #d9820f;
`;

const StatRow = styled.div<{ $color?: string }>`
  display: flex;
  align-items: center;
  justify-content: space-between;
  height: 62px;
  color: ${(p) => p.$color || PALE};
  font-size: 32px;
`;

const StatValue = styled.span<{ $dark?: boolean }>`
  color: ${(p) => (p.$dark ? "#222" : "inherit")};
  font-size: 29px;
  font-weight: 500;
`;

const Segment = styled.div`
  display: grid;
  grid-template-columns: 1fr 1fr;
  height: 72px;
  margin: 15px 0;
  padding: 5px;
  border-radius: 10px;
  background: #f4f4f4;
`;

const SegmentItem = styled.button<{ $on?: boolean }>`
  border-radius: 6px;
  background: ${(p) => (p.$on ? "#fff" : "transparent")};
  color: ${(p) => (p.$on ? "#222" : PALE)};
  font-size: 31px;
`;

const Explain = styled.a`
  display: flex;
  align-items: center;
  gap: 10px;
  height: 62px;
  color: ${PALE};
  font-size: 33px;
`;

const ChipsFoot = styled.div`
  display: flex;
  justify-content: space-between;
  margin-top: auto;
`;

const FootButton = styled.button<{ $blue?: boolean }>`
  display: flex;
  align-items: center;
  gap: 10px;
  height: 65px;
  padding: 0 13px;
  border-radius: 6px;
  background: ${(p) => (p.$blue ? "#e8eefd" : "#f3f3f3")};
  color: ${(p) => (p.$blue ? "#3a63e8" : GREY)};
  font-size: ${(p) => (p.$blue ? 33 : 35)}px;
`;

const InfoTabs = styled.nav`
  display: flex;
  align-items: baseline;
  gap: 64px;
  padding: 22px 45px 0;
`;

const InfoTab = styled.button<{ $on?: boolean }>`
  font-size: ${(p) => (p.$on ? 49 : 45)}px;
  font-weight: ${(p) => (p.$on ? 700 : 400)};
  line-height: 72px;
  color: ${(p) => (p.$on ? INK : GREY)};
  white-space: nowrap;
`;

const Footer = styled.footer`
  position: relative;
  background: #262626;
  color: #d4d4d4;
`;

const Toolbar = styled.div`
  display: grid;
  grid-template-columns: 248fr repeat(4, 208fr);
  height: 153px;
`;

const Sector = styled.button`
  display: flex;
  flex-direction: column;
  align-items: center;
  padding-top: 11px;
  color: #c4c4c4;
  font-size: 35px;
  line-height: 61px;

  svg { margin-bottom: 6px; }
  b { color: #f00; font-family: Roboto, sans-serif; font-weight: 400; font-size: 35px; }
`;

const Tool = styled.button`
  display: flex;
  flex-direction: column;
  align-items: center;
  padding-top: 20px;
  font-size: 35px;
  line-height: 54px;
`;

const SystemNav = styled.div`
  display: grid;
  grid-template-columns: repeat(3, 1fr);
  justify-items: center;
  align-items: center;
  height: 132px;
  padding: 0 160px 0 146px;
`;

/* ---------- icons ---------- */

const Caret = ({ w = 18, fill = "#666" }: { w?: number; fill?: string }) => (
  <svg width={w} height={w * 0.72} viewBox="0 0 20 14" aria-hidden>
    <path d="M1 0H19Q20 1 19 2L11 13.500Q10 14 9 13.500L1 2Q0 1 1 0Z" fill={fill} />
  </svg>
);

const Question = ({ size = 36, color = "#bbb" }: { size?: number; color?: string }) => (
  <svg width={size} height={size} viewBox="0 0 36 36" fill="none" stroke={color} strokeWidth="2.500" aria-hidden>
    <circle cx="18" cy="18" r="16.500" />
    <path d="M13 14.500Q13 9.500 18 9.500T23 14.500Q23 17 20 18.500Q18 19.500 18 22.500" />
    <circle cx="18" cy="26.500" r="0.800" />
  </svg>
);

const Robot = () => (
  <svg width="74" height="68" viewBox="0 0 74 68" aria-hidden>
    <defs>
      <linearGradient id="shell" x1="0" y1="0" x2="1" y2="1">
        <stop offset="0" stopColor="#ffffff" />
        <stop offset="1" stopColor="#bcb8e6" />
      </linearGradient>
      <linearGradient id="rim" x1="0" y1="0" x2="1" y2="0">
        <stop offset="0" stopColor="#5ec8f0" />
        <stop offset="0.600" stopColor="#8a4be0" />
        <stop offset="1" stopColor="#4a5ae0" />
      </linearGradient>
    </defs>
    <path d="M26 5Q37 1 37 12" stroke="#e9e6f8" strokeWidth="3" fill="none" />
    <circle cx="26" cy="5" r="4.500" fill="#f4f2ff" />
    <rect x="1" y="29" width="10" height="20" rx="5" fill="#dcdcf4" />
    <rect x="63" y="29" width="10" height="20" rx="5" fill="#b6b4e4" />
    <path d="M37 11C56 11 69 21 69 38C69 57 55 67 37 67C19 67 5 57 5 38C5 21 18 11 37 11Z" fill="url(#shell)" />
    <path d="M37 19C54 19 64 24 64 39C64 53 54 58 37 58C20 58 10 53 10 39C10 24 20 19 37 19Z" fill="#222b4e" stroke="url(#rim)" strokeWidth="1.500" />
    <rect x="24" y="32" width="6" height="15" rx="3" fill="#fff" />
    <rect x="44" y="32" width="6" height="15" rx="3" fill="#fff" />
  </svg>
);

const Signal = ({ label }: { label: string }) => (
  <svg width="47" height="34" viewBox="0 0 47 34" fill="currentColor" aria-hidden>
    <text x="0" y="15" fontSize="19" fontWeight="500">{label}</text>
    <rect x="3" y="21" width="7" height="12" rx="1" />
    <rect x="15" y="18" width="7" height="15" rx="1" />
    <rect x="27" y="11" width="7" height="22" rx="1" />
    <rect x="39" y="3" width="7" height="30" rx="1" />
  </svg>
);

/* ---------- page ---------- */

const Indicator = ({ name, link, readings, children, open }: {
  name: string;
  link?: boolean;
  readings: React.ReactNode;
  children: React.ReactNode;
  open?: React.ReactNode;
}) => (
  <Panel $open={!!open}>
    {children}
    <PanelHead>
      <Picker $large>
        <select aria-label="指标" defaultValue={name}><option>{name}</option></select>
        <Caret />
      </Picker>
      {open}
      {link && (
        <>
          <button aria-label="指标说明"><Question /></button>
          <PanelLink href="#funds">查看暗盘资金</PanelLink>
        </>
      )}
    </PanelHead>
    <Readings>{readings}</Readings>
  </Panel>
);

const AVERAGES: [string, string][] = [
  ["M5:8.15", "#111"], ["M10:7.78", "#e5a019"], ["M20:6.32", "#ec6076"], ["M30:6.06", "#6cc644"], ["M60:5.99", "#2f76ab"], ["M120:6.79", "#551455"], ["M180:5.87", "#b14d3c"],
];

const App: React.FC = () => (
  <Screen>
    <GlobalStyle />
    <Header>
      <StatusBar>
        <span>14:20</span>
        <StatusIcons>
          <svg width="32" height="36" viewBox="0 0 32 36" fill="currentColor" aria-hidden>
            <path d="M16 1Q18 1 18.500 3.500Q26 6 26 15V22L30 28H2L6 22V15Q6 6 13.500 3.500Q14 1 16 1ZM12 31H20Q19 34 16 34T12 31Z" />
            <path d="M1 6L30 34" stroke="#f22f37" strokeWidth="6" />
            <path d="M2 5L31 32" stroke="currentColor" strokeWidth="2.500" />
          </svg>
          <Speed><b>3.00</b>KB/S</Speed>
          <svg width="44" height="36" viewBox="0 0 44 36" fill="none" stroke="currentColor" strokeWidth="4" aria-hidden>
            <path d="M2 12Q21 -6 40 12M7 19Q21 6 35 19M13 25Q21 18 29 25" />
            <circle cx="21" cy="31" r="3" fill="currentColor" stroke="none" />
            <path d="M34 26L39 20L44 26ZM34 29L39 35L44 29Z" fill="currentColor" stroke="none" />
          </svg>
          <svg width="40" height="28" viewBox="0 0 40 28" aria-hidden>
            <rect width="40" height="28" rx="4" fill="currentColor" />
            <g fill="#f22f37" fontWeight="700">
              <text x="3" y="21" fontSize="18">HD</text>
              <text x="29" y="13" fontSize="12">1</text>
              <text x="29" y="25" fontSize="12">2</text>
            </g>
          </svg>
          <Signal label="4G" />
          <Signal label="5G" />
          <svg width="95" height="32" viewBox="0 0 95 32" aria-hidden>
            <rect x="1" y="1" width="61" height="29" rx="7" fill="none" stroke="currentColor" strokeWidth="2" />
            <rect x="5" y="5" width="26" height="21" rx="3" fill="#fff" fillOpacity="0.25" />
            <path d="M65 11V21" stroke="currentColor" strokeWidth="3" />
            <text x="31" y="24" fontSize="23" textAnchor="middle" fill="currentColor">47</text>
            <path d="M87 0L75 18H84L83 31L95 12H86Z" fill="currentColor" />
          </svg>
        </StatusIcons>
      </StatusBar>
      <TitleBar>
        <div>
          <BackButton aria-label="返回">
            <svg width="38" height="66" viewBox="0 0 38 66" fill="none" stroke="#fff" strokeWidth="5" aria-hidden><path d="M35 3L4 33L35 63" /></svg>
          </BackButton>
        </div>
        <TitleMiddle>
          <button aria-label="上一只"><svg width="24" height="36" viewBox="0 0 24 36" aria-hidden><path d="M24 0V36L0 18Z" fill="#fff" /></svg></button>
          <TitleText>
            <h1>渝三峡 A</h1>
            <CodeRow>000565<Badge>融</Badge><Badge>L1</Badge></CodeRow>
          </TitleText>
          <button aria-label="下一只"><svg width="24" height="36" viewBox="0 0 24 36" aria-hidden><path d="M0 0V36L24 18Z" fill="#fff" /></svg></button>
        </TitleMiddle>
        <TitleActions>
          <button aria-label="智能助手"><Robot /></button>
          <button aria-label="搜索">
            <svg width="60" height="60" viewBox="0 0 60 60" fill="none" stroke="#fff" strokeWidth="4" aria-hidden>
              <circle cx="28" cy="29" r="26.500" /><path d="M47 46L58 58" strokeWidth="5" />
            </svg>
          </button>
        </TitleActions>
      </TitleBar>
    </Header>

    <Body>
      <Quote>
        <LastPrice>
          <strong>7.38</strong>
          <Change><span>0.04</span><span>0.54%</span></Change>
        </LastPrice>
        <Facts>
          <Fact><FactName>高</FactName><FactValue $color={RED}>7.42</FactValue></Fact>
          <Fact><FactName>低</FactName><FactValue $color={GREEN}>7.31</FactValue></Fact>
          <Fact><FactName>开</FactName><FactValue $color={RED}>7.36</FactValue></Fact>
        </Facts>
        <Facts>
          <Fact><FactName>市值</FactName><FactValue>32.00亿</FactValue></Fact>
          <Fact><FactName>流通</FactName><FactValue>32.00亿</FactValue></Fact>
          <Fact><FactName $small>市盈<sup>TTM</sup></FactName><FactValue $small>550.17</FactValue></Fact>
        </Facts>
        <Facts>
          <Fact><FactName>量比</FactName><FactValue $color={GREEN}>0.45</FactValue></Fact>
          <Fact><FactName>换</FactName><FactValue>1.65%</FactValue></Fact>
          <Fact><FactName>额</FactName><FactValue>5271.9万</FactValue></Fact>
        </Facts>
        <Corner />
      </Quote>
      <Divider />

      <PeriodTabs>
        <PeriodTab>分时</PeriodTab>
        <PeriodTab>日K</PeriodTab>
        <PeriodTab>周K</PeriodTab>
        <PeriodTab $on>月K</PeriodTab>
        <PeriodTab>五日</PeriodTab>
        <PeriodTab>更多<Caret w={23} fill="#a8a8a8" /></PeriodTab>
        <IconButton $end aria-label="设置">
          <svg width="48" height="46" viewBox="0 0 48 46" fill="none" stroke="#999" strokeWidth="4" strokeLinejoin="round" aria-hidden>
            <path d="M14 2H34L46 23L34 44H14L2 23Z" /><circle cx="24" cy="23" r="7" />
          </svg>
        </IconButton>
      </PeriodTabs>

      <Legend>
        <Picker>
          <select aria-label="主图指标" defaultValue="均线"><option>均线</option></select>
          <Caret />
        </Picker>
        <Averages>
          <Tint>月线</Tint>
          {AVERAGES.map(([label, color]) => <Tint key={label} $color={color}>{label}</Tint>)}
        </Averages>
        <LegendActions>
          <button>前复权</button>
          <OutlineButton>筹码</OutlineButton>
        </LegendActions>
      </Legend>

      <Charts>
        <div>
          <PriceBox>
            <PriceChart />
            <RoundButton $left={5} aria-label="展开">
              <svg width="36" height="36" viewBox="0 0 36 36" fill="none" stroke="#444" strokeWidth="3" aria-hidden><path d="M3 2L19 18L3 34M18 2L34 18L18 34" /></svg>
            </RoundButton>
            <RoundButton $left={113} aria-label="全屏">
              <svg width="38" height="38" viewBox="0 0 38 38" fill="none" stroke="#444" strokeWidth="4" aria-hidden><path d="M2 18V3H18M20 35H36V20" /></svg>
            </RoundButton>
          </PriceBox>
          <Dates><span>1998/12/31</span><span>2025/11/25</span></Dates>
          <Panels>
            <Indicator
              name="MACD(12,26,9)"
              link
              readings={<><Tint $color="#dc3535">MACD:+0.39</Tint><Break /><Tint>DIFF:+0.76</Tint><Tint $color={ORANGE}>DEA:+0.56</Tint></>}
            >
              <MacdPlot />
            </Indicator>
            <Indicator
              name="KDJ(9,3,3)"
              link
              readings={<><Tint>K:+38.61</Tint><Tint $color={ORANGE}>D:+45.59</Tint><Break /><Tint $color="#d3417f">J:+24.65</Tint></>}
            >
              <KdjPlot />
            </Indicator>
            <Indicator
              name="BOLL(20,2)"
              link
              readings={<><Tint $color={BLUE}>MID:+6.32</Tint><Break /><Tint $color="#dc3535">UPPER:+10.09</Tint><Break /><Tint $color="#0a950a">LOWER:+2.56</Tint></>}
            >
              <BollPlot />
            </Indicator>
            <Indicator
              name="成交量"
              open={<Readings><Tint $color="#36691a">量:462.8万</Tint><Tint>M5:412.2万</Tint></Readings>}
              readings={<><Tint $color={ORANGE}>M10:585.5万</Tint><span><Tint>换手率:</Tint><Tint $color="#42a8e8">106.73%</Tint></span></>}
            >
              <VolumePlot />
            </Indicator>
          </Panels>
        </div>

        <Chips>
          <CostChart />
          <ChipsBody>
            <ChipTabs>
              <ChipTab $on>全部筹码</ChipTab>
              <ChipTab>
                主力筹码
                <LockBadge>
                  <svg width="24" height="24" viewBox="0 0 24 24" fill="none" stroke="#fff" strokeWidth="2" aria-hidden>
                    <rect x="2" y="9" width="20" height="13" rx="2" /><path d="M7 9V6Q7 3 12 3T17 6V9M12 14V18" />
                  </svg>
                </LockBadge>
              </ChipTab>
            </ChipTabs>
            <StatRow $color="#e8283c"><span>收盘获利</span><StatValue>2.44%</StatValue></StatRow>
            <StatRow $color="#f29a12"><span>平均成本</span><StatValue>8.40</StatValue></StatRow>
            <Segment>
              <SegmentItem $on>90%筹码</SegmentItem>
              <SegmentItem>70%筹码</SegmentItem>
            </Segment>
            <StatRow><span>价格区间</span><StatValue $dark>7.60 – 10.60</StatValue></StatRow>
            <StatRow><span>集中度</span><StatValue $dark>16.48%</StatValue></StatRow>
            <Explain href="#explain">筹码分布说明<Question size={27} color="#999" /></Explain>
            <ChipsFoot>
              <FootButton $blue>
                <svg width="33" height="33" viewBox="0 0 33 33" stroke="#3a63e8" strokeWidth="4" aria-hidden><path d="M0 2H17M0 9H25M0 16H33M0 24H25M0 31H17" /></svg>
                筹码选股
              </FootButton>
              <FootButton>关闭</FootButton>
            </ChipsFoot>
          </ChipsBody>
        </Chips>
      </Charts>
      <Divider />

      <InfoTabs>
        <InfoTab>看点</InfoTab>
        <InfoTab $on>资讯</InfoTab>
        <InfoTab>盘口</InfoTab>
        <InfoTab>资金</InfoTab>
        <InfoTab>社区</InfoTab>
        <InfoTab>简况(F10)</InfoTab>
      </InfoTabs>
    </Body>

    <Footer>
      <Toolbar>
        <Sector>
          <svg width="26" height="15" viewBox="0 0 26 15" aria-hidden><path d="M13 0L26 15H0Z" fill="#b8b8b8" /></svg>
          <span>化学制品</span>
          <b>1.41%</b>
        </Sector>
        <Tool>
          <svg width="50" height="60" viewBox="0 0 50 60" fill="none" stroke="#d4d4d4" strokeWidth="3" aria-hidden>
            <path d="M7 4H43Q48 4 48 9V45L37 56H7Q2 56 2 51V9Q2 4 7 4ZM8 18H42M8 25H42M8 32H42M8 39H32" />
          </svg>
          下单
        </Tool>
        <Tool>
          <svg width="58" height="60" viewBox="0 0 58 60" fill="none" stroke="#d4d4d4" strokeWidth="3" aria-hidden>
            <rect x="2" y="13" width="54" height="41" rx="6" /><path d="M18 8H40M29 23V43M19 33H39M10 56H20M38 56H48" />
          </svg>
          诊股
        </Tool>
        <Tool>
          <svg width="50" height="60" viewBox="0 0 50 60" fill="none" stroke="#d4d4d4" strokeWidth="3" aria-hidden>
            <rect x="2" y="7" width="46" height="46" /><path d="M12 30H38" />
          </svg>
          删自选
        </Tool>
        <Tool>
          <svg width="52" height="60" viewBox="0 0 52 60" fill="none" stroke="#d4d4d4" strokeWidth="3" aria-hidden>
            <circle cx="26" cy="30" r="24" /><path d="M15 23H37M15 37H37" />
          </svg>
          功能
        </Tool>
      </Toolbar>
      <SystemNav>
        <button aria-label="最近任务">
          <svg width="36" height="36" viewBox="0 0 36 36" stroke="#777" strokeWidth="3" aria-hidden><path d="M0 2H36M0 18H36M0 34H36" /></svg>
        </button>
        <button aria-label="主页">
          <svg width="36" height="36" viewBox="0 0 36 36" fill="none" stroke="#777" strokeWidth="2" aria-hidden><rect x="1" y="1" width="34" height="34" rx="8" /></svg>
        </button>
        <button aria-label="后退">
          <svg width="36" height="36" viewBox="0 0 36 36" fill="none" stroke="#777" strokeWidth="2" strokeLinejoin="round" aria-hidden><path d="M34 4V32Q34 35 31 33L3 20Q1 18 3 16L31 3Q34 1 34 4Z" /></svg>
        </button>
      </SystemNav>
    </Footer>
  </Screen>
);

export default App;
